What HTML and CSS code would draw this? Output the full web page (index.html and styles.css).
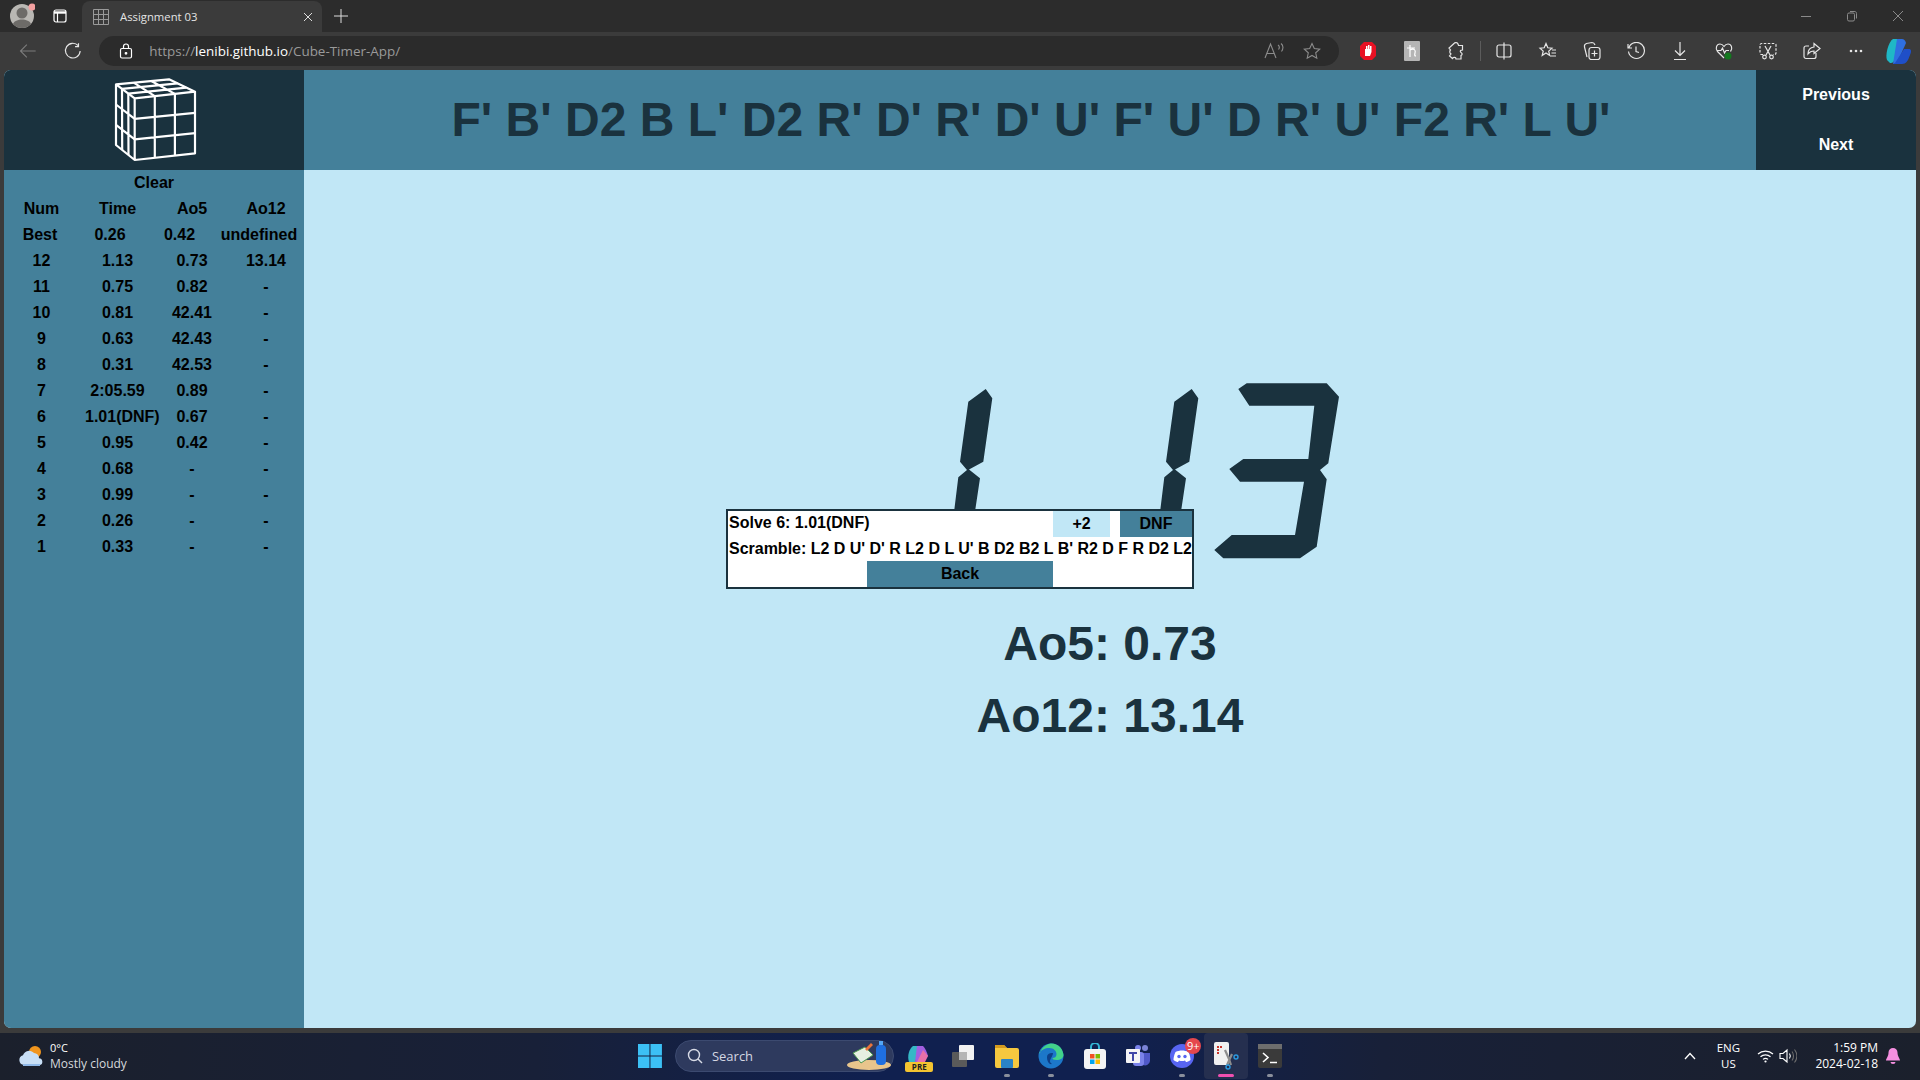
FILE: index.html
```html
<!DOCTYPE html>
<html lang="en">
<head>
<meta charset="utf-8">
<title>Assignment 03</title>
<link rel="stylesheet" href="styles.css">
</head>
<body>
<div class="screen">
  <div class="tabstrip">
    <div class="avatar">
      <svg width="26" height="26" viewBox="0 0 26 26"><circle cx="13" cy="13" r="12" fill="#b9b7b3"/><circle cx="13" cy="10" r="5.5" fill="#6d6b68"/><path d="M4 21c2-6 16-6 18 0a12 12 0 0 1-18 0z" fill="#6d6b68"/><circle cx="23" cy="4" r="3.5" fill="#f4a0a0"/></svg>
    </div>
    <svg class="tabs-btn" width="14" height="14" viewBox="0 0 14 14" fill="none" stroke="#fff" stroke-width="1.2"><rect x="1" y="1" width="12" height="12" rx="2"/><path d="M1 3.5h12" stroke-width="2.4"/><path d="M4.5 4v9"/></svg>
    <div class="tab">
      <svg width="16" height="16" viewBox="0 0 16 16" fill="none" stroke="#9a9a9a"><path d="M.5.5h15v15H.5zM5.5.5v15M10.500.5v15M.5 5.500h15M.5 10.500h15"/></svg>
      <span class="tab-title">Assignment 03</span>
      <svg class="tab-close" width="10" height="10" viewBox="0 0 10 10" stroke="#ddd" stroke-width="1"><path d="M1 1l8 8M9 1l-8 8"/></svg>
    </div>
    <svg class="newtab" width="16" height="16" viewBox="0 0 16 16" stroke="#ddd" stroke-width="1"><path d="M8 1v14M1 8h14"/></svg>
    <div class="winctl">
      <svg width="12" height="12" viewBox="0 0 12 12" stroke="#8a8a8a"><path d="M1 6.500h10"/></svg>
      <svg width="12" height="12" viewBox="0 0 12 12" stroke="#8a8a8a" fill="none"><rect x="1.500" y="3" width="7" height="8" rx="1.500"/><path d="M4 1.500h4a2 2 0 0 1 2.500 2v5"/></svg>
      <svg width="12" height="12" viewBox="0 0 12 12" stroke="#8a8a8a"><path d="M1 1l10 10M11 1L1 11"/></svg>
    </div>
  </div>

  <div class="toolbar">
    <svg class="nav-back" width="18" height="16" viewBox="0 0 18 16" fill="none" stroke="#7d7d7d" stroke-width="1.1"><path d="M17 8H1.500M8 1.500L1.500 8 8 14.500"/></svg>
    <svg class="nav-reload" width="18" height="18" viewBox="0 0 18 18" fill="none" stroke="#e6e6e6" stroke-width="1.200"><path d="M14.500 3.500A7.500 7.500 0 1 0 16.500 9M14.800 1v3.500h-3.500"/></svg>
    <div class="address">
      <svg width="14" height="16" viewBox="0 0 14 16" fill="none" stroke="#fff" stroke-width="1.200"><rect x="1.500" y="5.500" width="11" height="9.500" rx="1.500"/><path d="M4.500 5.500V3.500a2.500 2.500 0 0 1 5 0v2"/><circle cx="7" cy="10.300" r=".8" fill="#fff"/></svg>
      <span class="url"><span class="url-dim">https://</span><span class="url-host">lenibi.github.io</span><span class="url-dim">/Cube-Timer-App/</span></span>
      <span class="addr-end">
        <svg width="22" height="18" viewBox="0 0 22 18" fill="none" stroke="#8c8c8c" stroke-width="1.100"><path d="M1 16L6.500 2 12 16M3 11.500h7M14 3c1.500 1 1.500 3 .5 4.500M17 1.500c2.500 2 2.500 5.500.5 8"/></svg>
        <svg width="18" height="18" viewBox="0 0 18 18" fill="none" stroke="#8c8c8c" stroke-width="1.100"><path d="M9 1.500l2.300 5 5.400.6-4 3.700 1.100 5.400L9 13.500 4.200 16.200l1.100-5.400-4-3.700 5.400-.6z"/></svg>
      </span>
    </div>
    <div class="tools">
      <svg width="18" height="20" viewBox="0 0 18 20"><path d="M5 1h8l4 4v10l-4 4H5l-4-4V5z" fill="#e81123"/><path d="M6 15V8h1V5h1.500v3h.5V4h1.500v4h.5V5h1.500v6l-1.500 4z" fill="#fff"/></svg>
      <svg width="16" height="20" viewBox="0 0 16 20"><rect width="16" height="20" rx="1" fill="#b5b5b5"/><path d="M3 7h8M6 4v12M6 9c4-2 6 0 5 3-.5 2-.5 3 1 3" fill="none" stroke="#fff" stroke-width="1.200"/></svg>
      <svg width="18" height="20" viewBox="0 0 18 20" fill="none" stroke="#e6e6e6" stroke-width="1.200"><path d="M7 2.500c1-1.500 3.500-1 4 .5l.5 1.500h4v4.500c-2 0-3 1-1.500 2.500 1.500.8 1.500 2.500 0 3v3.500h-5c0-2-2.500-2-3.500-.5L2.500 15 4 13c-1.500-1-1.500-3-.5-4L2 7z"/></svg>
      <span class="tool-divider"></span>
      <svg width="16" height="18" viewBox="0 0 16 18" fill="none" stroke="#e6e6e6" stroke-width="1.200"><rect x="1" y="3" width="14" height="12" rx="2"/><path d="M8 .5v17"/></svg>
      <svg width="18" height="18" viewBox="0 0 18 18" fill="none" stroke="#e6e6e6" stroke-width="1.200"><path d="M7 1.500l1.800 4.300 4.200.4-3.300 2.900 1 4.400L7 11l-3.800 2.500 1-4.400L1 6.200l4.200-.4zM13 8h4M12.500 11H17M11.500 14H17"/></svg>
      <svg width="18" height="20" viewBox="0 0 18 20" fill="none" stroke="#e6e6e6" stroke-width="1.200"><path d="M4 16L1.500 6c-.4-2 .5-3 2-3.500L9 1.500c1.500 0 2.500 1 3 2.500"/><rect x="6" y="6.500" width="11" height="12" rx="2.500"/><path d="M11.500 9.500v6M8.500 12.500h6"/></svg>
      <svg width="18" height="18" viewBox="0 0 18 18" fill="none" stroke="#e6e6e6" stroke-width="1.200"><path d="M1 2v4h4M2 5.500A8 8 0 1 1 1.500 9.500M9 4.500V9.500l3 1"/></svg>
      <svg width="14" height="20" viewBox="0 0 14 20" fill="none" stroke="#e6e6e6" stroke-width="1.200"><path d="M7 1v13M2 9.500L7 14.500l5-5M1 18.500h12"/></svg>
      <svg width="18" height="20" viewBox="0 0 18 20" fill="none" stroke="#e6e6e6" stroke-width="1.200"><path d="M9 17L2.500 10.500C0 7.500 1.500 3 5 3c2 0 3 1 4 2.500C10 4 11 3 13 3c3.500 0 5 4.500 2.500 7.500M2 9.500h4L7.500 7l2 5 1.500-2.500h3"/><circle cx="13" cy="15" r="3.500" fill="#13781e" stroke="none"/></svg>
      <svg width="18" height="18" viewBox="0 0 18 18" fill="none" stroke="#e6e6e6" stroke-width="1.200"><path d="M4 12.500H2.500a1.500 1.500 0 0 1-1.500-1.500V3a1.500 1.500 0 0 1 1.500-1.500h13A1.500 1.500 0 0 1 17 3v8a1.500 1.500 0 0 1-1.500 1.500H14" stroke-dasharray="2.500 1.500"/><path d="M6 4l5 9M12 4l-5 9"/><circle cx="5.500" cy="15" r="1.800"/><circle cx="12.500" cy="15" r="1.800"/></svg>
      <svg width="18" height="18" viewBox="0 0 18 18" fill="none" stroke="#e6e6e6" stroke-width="1.200"><path d="M13 11v3.500a2 2 0 0 1-2 2H3a2 2 0 0 1-2-2V6a2 2 0 0 1 2-2h3M11 1.500L17 6.500l-6 5V9c-3 0-4.500 1-6 3 0-4 2-6.500 6-7z"/></svg>
      <svg width="14" height="4" viewBox="0 0 14 4" fill="#e6e6e6"><circle cx="2" cy="2" r="1.300"/><circle cx="7" cy="2" r="1.300"/><circle cx="12" cy="2" r="1.300"/></svg>
      <svg class="copilot" width="26" height="28" viewBox="0 0 26 28"><path d="M8 2h8L9 24c-1 2-3 2-4 2l-3-3C0 19 3 5 8 2z" fill="#1fb8c6"/><path d="M12 2h5c2 0 3 1 4 4l-8 18c-1 2-3 3-5 3z" fill="#2f6fe0"/><path d="M10 26l9-14h5c2 0 3 2 1 6-2 6-4 9-8 9H8z" fill="#1f4fc8"/></svg>
    </div>
  </div>

  <div class="frame">
    <div class="app">
      <header class="app-header">
        <div class="logo-box">
          <svg class="cube" width="90" height="90" viewBox="0 0 90 90" fill="none" stroke="#fff" stroke-width="2.200" stroke-linejoin="round">
            <path d="M6 9.300L59 4.300 85 16.700 24.700 23.300zM24.700 23.300V85L85 78.300V16.700M6 9.300V70L24.700 85"/>
            <path d="M44.800 21.100V82.800M64.900 18.900V80.500M24.700 43.900L85 37.900M24.700 64.400L85 58.100"/>
            <path d="M12 13.900L12.200 75M18.300 18.600L18.500 80M6 29.500L24.700 43.900M6 49.800L24.700 64.400"/>
            <path d="M23.700 7.600L44.800 21.100M41.300 6L64.900 18.900M12 13.900L67.700 8.400M18.300 18.600L76.300 12.600"/>
          </svg>
        </div>
        <div class="scramble">F' B' D2 B L' D2 R' D' R' D' U' F' U' D R' U' F2 R' L U'</div>
        <div class="scramble-nav">
          <div class="nav-item">Previous</div>
          <div class="nav-item">Next</div>
        </div>
      </header>
      <div class="app-body">
        <aside class="sidebar">
          <div class="clear">Clear</div>
          <div class="row"><span>Num</span><span>Time</span><span>Ao5</span><span>Ao12</span></div>
          <div class="row row-best"><span>Best</span><span>0.26</span><span>0.42</span><span>undefined</span></div>
          <div class="row"><span>12</span><span>1.13</span><span>0.73</span><span>13.14</span></div>
          <div class="row"><span>11</span><span>0.75</span><span>0.82</span><span>-</span></div>
          <div class="row"><span>10</span><span>0.81</span><span>42.41</span><span>-</span></div>
          <div class="row"><span>9</span><span>0.63</span><span>42.43</span><span>-</span></div>
          <div class="row"><span>8</span><span>0.31</span><span>42.53</span><span>-</span></div>
          <div class="row"><span>7</span><span>2:05.59</span><span>0.89</span><span>-</span></div>
          <div class="row"><span>6</span><span class="time-dnf">1.01(DNF)</span><span>0.67</span><span>-</span></div>
          <div class="row"><span>5</span><span>0.95</span><span>0.42</span><span>-</span></div>
          <div class="row"><span>4</span><span>0.68</span><span>-</span><span>-</span></div>
          <div class="row"><span>3</span><span>0.99</span><span>-</span><span>-</span></div>
          <div class="row"><span>2</span><span>0.26</span><span>-</span><span>-</span></div>
          <div class="row"><span>1</span><span>0.33</span><span>-</span><span>-</span></div>
        </aside>
        <main class="timer-pane">
          <div class="timer" role="img" aria-label="1.13">
            <div class="digit digit-one"></div>
            <div class="dot-cell"><div class="dot"></div></div>
            <div class="digit digit-one"></div>
            <div class="digit digit-three"></div>
          </div>
          <div class="avg">Ao5: 0.73</div>
          <div class="avg">Ao12: 13.14</div>
        </main>
      </div>
    </div>
  </div>

  <div class="taskbar">
    <div class="weather">
      <svg width="26" height="24" viewBox="0 0 26 24"><circle cx="17" cy="8" r="6" fill="#f0951e"/><path d="M6 21a5 5 0 0 1-1-9.800A6.500 6.500 0 0 1 16 9a5 5 0 0 1 5 5.200A3.500 3.500 0 0 1 22 21z" fill="#c8dff6"/><path d="M5 21h17" stroke="#8fb8e8" stroke-width="2"/></svg>
      <div class="weather-text"><span class="temp">0°C</span><span class="cond">Mostly cloudy</span></div>
    </div>
    <div class="task-center">
      <svg class="start" width="24" height="24" viewBox="0 0 24 24"><path d="M0 0h11.500v11.500H0zM12.500 0H24v11.500H12.500zM0 12.500h11.500V24H0zM12.500 12.500H24V24H12.500z" fill="#3cc0f5"/></svg>
      <div class="search">
        <svg width="16" height="16" viewBox="0 0 16 16" fill="none" stroke="#d8dbe6" stroke-width="1.400"><circle cx="7" cy="7" r="5.500"/><path d="M11 11l4 4"/></svg>
        <span class="search-text">Search</span>
        <svg class="search-art" width="46" height="30" viewBox="0 0 46 30"><ellipse cx="22" cy="24" rx="22" ry="5" fill="#e8c58c"/><path d="M6 12l12-6 8 8-12 8z" fill="#e6efe1" stroke="#4e9a51"/><path d="M18 8l6-6 2 2-6 6z" fill="#e8743b"/><rect x="29" y="4" width="10" height="20" rx="4" fill="#1f6fe0"/><rect x="32" y="0" width="4" height="4" fill="#54a7f5"/></svg>
      </div>
      <div class="task-icon">
        <svg width="24" height="24" viewBox="0 0 24 24"><path d="M6 2h8L8 18H2C0 12 2 5 6 2z" fill="#35b8c6"/><path d="M10 2h6c2 2 4 6 5 10l-9 6H8z" fill="#a25fe0"/><path d="M16 6l5 6-3 6h-8z" fill="#e86fa8"/></svg>
        <span class="pre">PRE</span>
      </div>
      <div class="task-icon"><svg width="24" height="24" viewBox="0 0 24 24"><rect x="8" y="1" width="15" height="15" rx="1" fill="#f2f2f2"/><rect x="1" y="8" width="15" height="15" rx="1" fill="#5a5a5a"/><rect x="8" y="8" width="8" height="8" fill="#b5b5b5"/></svg></div>
      <div class="task-icon running"><svg width="26" height="24" viewBox="0 0 26 24"><path d="M1 3a2 2 0 0 1 2-2h7l3 3h10a2 2 0 0 1 2 2v16a2 2 0 0 1-2 2H3a2 2 0 0 1-2-2z" fill="#f6c83f"/><path d="M1 1h9l3 3H1z" fill="#d49a1f"/><rect x="7" y="15" width="12" height="9" rx="1" fill="#2a83c6"/></svg></div>
      <div class="task-icon running"><svg width="26" height="26" viewBox="0 0 26 26"><circle cx="13" cy="13" r="12.500" fill="#1c77c9"/><path d="M2 10C4 3 10 .5 14 .5c6 0 11 5 11.500 11.500 0 3-3 5-7 5-3 0-4-1-4-2 2 0 4-1 4-4s-3-6-7-6-9 2-10.500 5.500z" fill="#42d28a"/><path d="M9 14c0-3 3-4.500 6-4 0 4-6 8-1 11-3 1-5-3-5-7z" fill="#0d3f88"/></svg></div>
      <div class="task-icon"><svg width="24" height="26" viewBox="0 0 24 26"><path d="M8 6V4a4 4 0 0 1 8 0v2" fill="none" stroke="#34b4d4" stroke-width="2"/><rect x="1" y="6" width="22" height="20" rx="3" fill="#f4f4f4"/><path d="M7 11h4.500v4.500H7z" fill="#f25022"/><path d="M12.500 11H17v4.500h-4.500z" fill="#7fba00"/><path d="M7 16.500h4.500V21H7z" fill="#00a4ef"/><path d="M12.500 16.500H17V21h-4.500z" fill="#ffb900"/></svg></div>
      <div class="task-icon"><svg width="26" height="24" viewBox="0 0 26 24"><circle cx="20" cy="4" r="3" fill="#7a83d6"/><path d="M15 9h10v8a5 5 0 0 1-7 4z" fill="#5059c9"/><circle cx="13" cy="4" r="3" fill="#7b83eb"/><rect x="8" y="8" width="11" height="14" rx="3" fill="#7b83eb"/><rect x="1" y="5" width="14" height="14" rx="1" fill="#f4f4f6"/><path d="M4 8h8v2H9v7H7v-7H4z" fill="#3f46a8"/></svg></div>
      <div class="task-icon running">
        <svg width="26" height="26" viewBox="0 0 26 26"><circle cx="13" cy="13" r="12" fill="#5865f2"/><path d="M6.500 9c4-2 9-2 13 0 1.500 3 2 6 2 8-2 1.500-3.500 2-4.500 2l-1-1.500c-2 .7-4 .7-6 0L9 19c-1 0-2.500-.5-4.500-2 0-2 .5-5 2-8z" fill="#fff"/><circle cx="10" cy="13.500" r="1.700" fill="#5865f2"/><circle cx="16" cy="13.500" r="1.700" fill="#5865f2"/></svg>
        <span class="badge">9+</span>
      </div>
      <div class="task-icon active">
        <svg width="26" height="28" viewBox="0 0 26 28"><rect x="1" y="0" width="15" height="23" rx="2" fill="#f1f1f1"/><path d="M4 4h2v2H4zM7 4h2v2H7zM4 7h2v2H4zM4 10h2v2H4z" fill="#c8352b"/><path d="M12 8l4 9 2 6M19 12l-5 11" stroke="#8d8d8d" stroke-width="2.200" fill="none"/><circle cx="23" cy="15" r="2" fill="none" stroke="#2b9ae0" stroke-width="1.400"/><circle cx="15" cy="25" r="2" fill="none" stroke="#2b9ae0" stroke-width="1.400"/></svg>
      </div>
      <div class="task-icon running"><svg width="24" height="24" viewBox="0 0 24 24"><rect width="24" height="24" rx="2" fill="#3a3a3a"/><rect width="24" height="5" fill="#6d6d6d"/><path d="M5 9l5 4.500-5 4.500" fill="none" stroke="#fff" stroke-width="1.600"/><path d="M12 18.500h7" stroke="#fff" stroke-width="1.500"/></svg></div>
    </div>
    <div class="tray">
      <svg class="tray-chevron" width="12" height="8" viewBox="0 0 12 8" fill="none" stroke="#fff" stroke-width="1.300"><path d="M1 7l5-5.500L11 7"/></svg>
      <div class="lang"><span>ENG</span><span>US</span></div>
      <svg class="wifi" width="17" height="14" viewBox="0 0 17 14" fill="none" stroke="#fff" stroke-width="1.200"><path d="M1 5a11 11 0 0 1 15 0M3.500 7.800a7.500 7.500 0 0 1 10 0M6 10.400a4 4 0 0 1 5 0"/><circle cx="8.500" cy="12.500" r="1.100" fill="#fff" stroke="none"/></svg>
      <svg class="volume" width="18" height="16" viewBox="0 0 18 16" fill="none" stroke="#fff" stroke-width="1.100"><path d="M1 5.500h3L8 2v12L4 10.500H1zM10.500 5.500c1 1.500 1 3.500 0 5"/><path d="M13 3.500c2 2.500 2 6.500 0 9M15.500 1.500c3 4 3 9 0 13" stroke="#6d6d6d"/></svg>
      <div class="clock"><span>1:59 PM</span><span>2024-02-18</span></div>
      <svg class="bell" width="14" height="16" viewBox="0 0 14 16"><path d="M7 0a4.500 4.500 0 0 1 4.500 4.500c0 4 2.500 6 2.500 8H0c0-2 2.500-4 2.500-8A4.500 4.500 0 0 1 7 0z" fill="#f58fe0"/><path d="M4.500 14h5a2.500 2 0 0 1-5 0z" fill="#f58fe0"/></svg>
    </div>
  </div>

  <div class="dialog">
    <div class="dlg-row dlg-top">
      <span class="dlg-title">Solve 6: 1.01(DNF)</span>
      <span class="dlg-btn dlg-plus">+2</span>
      <span class="dlg-btn dlg-dnf">DNF</span>
    </div>
    <div class="dlg-scramble">Scramble: L2 D U' D' R L2 D L U' B D2 B2 L B' R2 D F R D2 L2</div>
    <div class="dlg-row dlg-bottom"><span class="dlg-btn dlg-back">Back</span></div>
  </div>
</div>
</body>
</html>
```

FILE: styles.css
```css
* { box-sizing: border-box; }
html, body { margin: 0; padding: 0; }
body { font-family: "Liberation Sans", Arial, sans-serif; background: #3b3b3b; }

.screen { position: relative; width: 1920px; height: 1080px; display: flex; flex-direction: column; overflow: hidden; }

/* browser chrome */
.tabstrip { height: 32px; background: #2c2c2c; display: flex; align-items: center; flex-shrink: 0; font-family: "Open Sans", sans-serif; }
.avatar { width: 26px; height: 26px; margin-left: 9px; }
.tabs-btn { margin-left: 18px; }
.tab { margin-left: 15px; width: 240px; height: 31px; margin-top: 1px; background: #3b3b3b; border-radius: 8px 8px 0 0; display: flex; align-items: center; padding: 0 9px 0 11px; }
.tab-title { margin-left: 11px; font-size: 11.3px; color: #e4e4e4; flex: 1; }
.newtab { margin-left: 11px; }
.winctl { margin-left: auto; display: flex; gap: 34px; padding-right: 16px; }

.toolbar { height: 38px; background: #3b3b3b; display: flex; align-items: center; flex-shrink: 0; font-family: "Open Sans", sans-serif; }
.nav-back { margin-left: 19px; }
.nav-reload { margin-left: 27px; }
.address { margin-left: 18px; width: 1265px; height: 30px; border-radius: 15px; background: #2b2b2b; display: flex; align-items: center; padding: 0 18px 0 20px; }
.url { margin-left: 16px; font-size: 13.45px; }
.url-dim { color: #9a9a9a; }
.url-host { color: #fff; }
.addr-end { margin-left: auto; display: flex; align-items: center; gap: 17px; }
.tools { display: flex; align-items: center; margin-left: 7.6px; gap: 0; flex: 1; }
.tools > svg { width: 44px; flex-shrink: 0; }
.tool-divider { width: 1px; height: 20px; background: #5c5c5c; margin: 0 1.3px 0 1.3px; }
.tools > .copilot { width: 44px; margin-left: -2px; }

/* app */
.frame { flex: 1; min-height: 0; padding: 0 4px 5px; background: #3b3b3b; }
.app { height: 100%; display: flex; flex-direction: column; border-radius: 7px; overflow: hidden; background: #c1e7f6; }
.app-header { height: 100px; display: flex; flex-shrink: 0; background: #44809a; }
.logo-box { width: 300px; background: #1a323e; padding: 5px 0 0 106px; }
.cube { display: block; }
.scramble { flex: 1; display: flex; align-items: center; justify-content: center; padding: 0 0 2px 2px; font-size: 48px; font-weight: 700; color: #1a323e; white-space: nowrap; }
.scramble-nav { width: 160px; background: #1a323e; display: flex; flex-direction: column; }
.nav-item { height: 50px; display: flex; align-items: center; justify-content: center; color: #fff; font-size: 16px; font-weight: 700; }

.app-body { flex: 1; min-height: 0; display: flex; }
.sidebar { width: 300px; background: #44809a; color: #000; font-size: 16px; font-weight: 700; }
.clear { height: 26px; line-height: 25px; text-align: center; }
.row { height: 26px; display: grid; grid-template-columns: 75px 77px 72px 76px; align-items: center; text-align: center; white-space: nowrap; }
.row-best { grid-template-columns: 72px 68px 71px 88px; }
.time-dnf { text-align: left; padding-left: 6px; }

.timer-pane { flex: 1; display: flex; flex-direction: column; align-items: center; padding-top: 210px; color: #1a323e; }
.timer { height: 228px; display: flex; align-items: flex-start; padding-right: 18px; }
.digit { width: 140px; height: 180px; background: #1a323e; }
.digit-one { clip-path: polygon(127.7px 9px, 134.3px 18.3px, 125.3px 81.7px, 111px 89.500px, 122px 98.3px, 112px 165px, 92px 165px, 100.3px 97.3px, 109px 90px, 102px 81.7px, 110.3px 21.7px); }
.digit-three { clip-path: polygon(34.3px 9px, 42.7px 3.3px, 122.7px 3.3px, 135px 16.7px, 124.3px 83.3px, 116px 90px, 122.7px 99.3px, 112.7px 166.7px, 96px 178.3px, 19.3px 178.3px, 10.3px 170px, 27.7px 155px, 91px 155px, 100px 101.7px, 36px 101.7px, 25.3px 89px, 39.3px 79px, 104.3px 79px, 110.3px 25.7px, 45.3px 25.7px); }
.dot-cell { width: 66px; height: 180px; display: flex; align-items: flex-end; justify-content: center; }
.dot { width: 20px; height: 20px; background: #1a323e; margin-bottom: 14px; }
.avg { font-size: 48px; font-weight: 700; line-height: 72px; }

/* dialog over the timer */
.dialog { position: absolute; top: 509px; left: 726px; width: 468px; height: 80px; background: #fff; border: 2px solid #1a323e; color: #000; font-size: 16px; font-weight: 700; display: flex; flex-direction: column; }
.dlg-row { display: flex; }
.dlg-top { height: 26px; align-items: stretch; }
.dlg-title { width: 325px; line-height: 24px; padding-left: 1px; }
.dlg-btn { display: flex; align-items: center; justify-content: center; }
.dlg-plus { width: 57px; background: #c1e7f6; }
.dlg-dnf { width: 72px; margin-left: 10px; background: #44809a; }
.dlg-scramble { height: 24px; line-height: 24px; padding-left: 1px; white-space: nowrap; letter-spacing: -0.01px; }
.dlg-bottom { height: 26px; padding-left: 139px; }
.dlg-back { width: 186px; background: #44809a; }

/* taskbar */
.taskbar { height: 47px; padding-bottom: 1px; flex-shrink: 0; display: grid; grid-template-columns: 1fr auto 1fr; align-items: center; background: linear-gradient(90deg, #1b202c 0%, #182038 28%, #10204f 45%, #10204f 58%, #182038 72%, #1b202c 100%); font-family: "Open Sans", sans-serif; color: #fff; }
.weather { display: flex; align-items: center; padding-left: 18px; gap: 6px; }
.weather-text { display: flex; flex-direction: column; line-height: 16px; }
.temp { font-size: 11px; }
.cond { font-size: 12px; color: #d6d8dc; }
.task-center { display: flex; align-items: center; width: 664px; padding-left: 10px; }
.start { margin-right: 13px; }
.search { width: 220px; height: 32px; border-radius: 16px; background: #2e3a5e; border: 1px solid #3c4a70; display: flex; align-items: center; padding-left: 11px; margin-right: 3px; }
.search-text { margin-left: 9px; font-size: 13px; color: #d4d7e2; }
.search-art { margin-left: auto; margin-right: 0; }
.task-icon { position: relative; width: 44px; height: 46px; display: flex; align-items: center; justify-content: center; }
.task-icon.running::after, .task-icon.active::after { content: ""; position: absolute; bottom: 2px; left: 50%; width: 6px; height: 3px; margin-left: -3px; border-radius: 2px; background: #8a8f9c; }
.task-icon.active { background: #252f4f; border-radius: 4px; }
.task-icon.active::after { width: 16px; margin-left: -8px; background: #f050b0; }
.pre { position: absolute; left: 8px; top: 29px; width: 28px; height: 10px; background: #f4c430; color: #222; font-size: 8px; line-height: 10px; font-weight: 700; text-align: center; border-radius: 2px; }
.badge { position: absolute; top: 5px; right: 3px; width: 16px; height: 16px; border-radius: 50%; background: #e5484d; color: #fff; font-size: 11px; line-height: 16px; text-align: center; }
.tray { display: flex; align-items: center; justify-content: flex-end; padding-right: 20px; font-size: 11.5px; }
.lang { display: flex; flex-direction: column; align-items: center; line-height: 16px; margin-left: 19px; width: 26px; }
.wifi { margin-left: 16px; }
.volume { margin-left: 5px; }
.clock { display: flex; flex-direction: column; align-items: flex-end; line-height: 16px; margin-left: 18px; font-size: 12px; }
.bell { margin-left: 8px; }
```
